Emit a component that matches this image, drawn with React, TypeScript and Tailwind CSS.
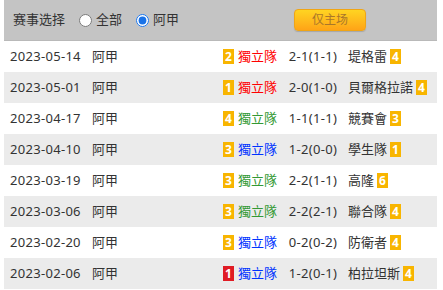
import React from 'react'

type Match = {
  date: string
  league: string
  homeRank: string
  homeColor: string
  score: string
  away: string
  awayRank: string
  redRank?: boolean
}

const matches: Match[] = [
  { date: '2023-05-14', league: '阿甲', homeRank: '2', homeColor: 'text-[#ff0000]', score: '2-1(1-1)', away: '堤格雷', awayRank: '4' },
  { date: '2023-05-01', league: '阿甲', homeRank: '1', homeColor: 'text-[#ff0000]', score: '2-0(1-0)', away: '貝爾格拉諾', awayRank: '4' },
  { date: '2023-04-17', league: '阿甲', homeRank: '4', homeColor: 'text-[#339933]', score: '1-1(1-1)', away: '競賽會', awayRank: '3' },
  { date: '2023-04-10', league: '阿甲', homeRank: '3', homeColor: 'text-[#0033ff]', score: '1-2(0-0)', away: '學生隊', awayRank: '1' },
  { date: '2023-03-19', league: '阿甲', homeRank: '3', homeColor: 'text-[#339933]', score: '2-2(1-1)', away: '高隆', awayRank: '6' },
  { date: '2023-03-06', league: '阿甲', homeRank: '3', homeColor: 'text-[#339933]', score: '2-2(2-1)', away: '聯合隊', awayRank: '4' },
  { date: '2023-02-20', league: '阿甲', homeRank: '3', homeColor: 'text-[#0033ff]', score: '0-2(0-2)', away: '防衛者', awayRank: '4' },
  { date: '2023-02-06', league: '阿甲', homeRank: '1', homeColor: 'text-[#0033ff]', score: '1-2(0-1)', away: '柏拉坦斯', awayRank: '4', redRank: true },
]

const Rank = ({ value, red }: { value: string; red?: boolean }) => (
  <span
    className={`inline-flex h-[15px] w-[11px] items-center justify-center text-[12px] leading-none font-bold text-white ${
      red ? 'bg-[#e01b24]' : 'bg-[#f8b500]'
    }`}
  >
    {value}
  </span>
)

export default function App() {
  return (
    <div
      className="ml-[4px] w-[433px] text-[13px] text-[#333]"
      style={{ fontFamily: '"Noto Sans", "Noto Sans CJK SC", sans-serif' }}
    >
      {/* filter bar */}
      <div className="flex h-[41px] items-center border-b border-[#b9b9b9] bg-[#c4c4c4] pl-[9px]">
        <span>赛事选择</span>
        <label className="ml-[14px] flex items-center gap-[4px]">
          <input type="radio" name="league" className="m-0 h-[13px] w-[13px]" />
          <span>全部</span>
        </label>
        <label className="ml-[14px] flex items-center gap-[4px]">
          <input
            type="radio"
            name="league"
            defaultChecked
            className="m-0 h-[13px] w-[13px] accent-[#1a73e8]"
          />
          <span>阿甲</span>
        </label>
        <button className="ml-[115px] h-[22px] w-[72px] rounded-[4px] border border-[#f0a516] bg-gradient-to-b from-[#ffd422] to-[#ffa417] text-[12px] text-[#a9772a] shadow-[0_1px_1px_rgba(0,0,0,0.15)]">
          仅主场
        </button>
      </div>

      {/* match list */}
      {matches.map((m, i) => (
        <div
          key={m.date}
          className={`grid h-[31px] grid-cols-[88px_131px_58px_64px_1fr] items-center ${
            i % 2 === 1 ? 'bg-[#ebebeb]' : 'bg-white'
          }`}
        >
          <span className="pl-[6px] tracking-[0.3px]">{m.date}</span>
          <span>{m.league}</span>
          <span className="flex items-center gap-[4px]">
            <Rank value={m.homeRank} red={m.redRank} />
            <span className={m.homeColor}>獨立隊</span>
          </span>
          <span className="text-center tracking-[0.3px]">{m.score}</span>
          <span className="flex items-center gap-[3px] pl-[3px]">
            <span>{m.away}</span>
            <Rank value={m.awayRank} />
          </span>
        </div>
      ))}
    </div>
  )
}
